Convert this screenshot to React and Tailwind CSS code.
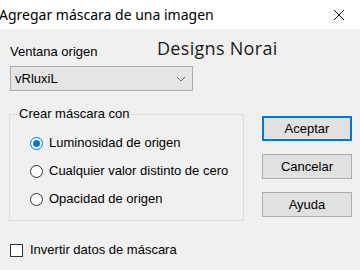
import React from "react";

function Radio({ checked, label }) {
  return (
    <div className="flex items-center h-[14px]">
      <div className={`w-[13px] h-[13px] rounded-full border bg-white flex items-center justify-center ${checked ? "border-[#0078d7]" : "border-[#333333]"}`}>
        {checked && <div className="w-[7px] h-[7px] rounded-full bg-[#0078d7]" />}
      </div>
      <span className="ml-[6px]">{label}</span>
    </div>
  );
}

function Btn({ label, primary }) {
  return (
    <div className={`w-[90px] h-[25px] flex items-center justify-center bg-[#e1e1e1] ${primary ? "border-2 border-[#0078d7]" : "border border-[#adadad]"}`}>
      {label}
    </div>
  );
}

export default function App() {
  return (
    <div className="w-[360px] h-[270px] bg-[#f0f0f0] relative overflow-hidden text-[13px] leading-[14px] text-black" style={{ fontFamily: '"Liberation Sans", Arial, sans-serif' }}>
      <div className="h-[29px] bg-white flex items-center justify-between">
        <span className="text-[14px] text-black -ml-[1px]" style={{ fontFamily: '"Noto Sans", "Open Sans", sans-serif' }}>Agregar máscara de una imagen</span>
        <svg width="12" height="12" viewBox="0 0 12 12" className="mr-[15px] mt-[1px]">
          <path d="M1 1 L11 11 M11 1 L1 11" stroke="#111" strokeWidth="1" fill="none" />
        </svg>
      </div>
      <div className="absolute left-[157px] top-[37px] text-[18px] leading-[22px] tracking-[0.3px] text-[#1a1a1a]" style={{ fontFamily: '"Open Sans", "Noto Sans", sans-serif' }}>Designs Norai</div>
      <div className="flex pl-[9px]">
        <div className="w-[235px] flex flex-col">
          <div className="mt-[16px] ml-[1px]">Ventana origen</div>
          <div className="mt-[7px] ml-[1px] w-[183px] h-[25px] bg-[#e5e5e5] border border-[#adadad] flex items-center justify-between pl-[4px] pr-[6px]">
            <span>vRluxiL</span>
            <svg width="10" height="6" viewBox="0 0 10 6">
              <path d="M1 1 L5 5 L9 1" stroke="#666" strokeWidth="1" fill="none" />
            </svg>
          </div>
          <fieldset className="mt-[16px] h-[114px] border border-[#dcdcdc] px-[8px]">
            <legend className="px-[2px] -ml-[1px]">Crear máscara con</legend>
            <div className="flex flex-col gap-[14px] mt-[15px] ml-[12px]">
              <Radio checked label="Luminosidad de origen" />
              <Radio label="Cualquier valor distinto de cero" />
              <Radio label="Opacidad de origen" />
            </div>
          </fieldset>
          <div className="mt-[22px] ml-[1px] flex items-center">
            <div className="w-[13px] h-[13px] border border-[#333333] bg-white" />
            <span className="ml-[7px]">Invertir datos de máscara</span>
          </div>
        </div>
        <div className="ml-[18px] mt-[87px] flex flex-col gap-[13px]">
          <Btn primary label="Aceptar" />
          <Btn label="Cancelar" />
          <Btn label="Ayuda" />
        </div>
      </div>
    </div>
  );
}
